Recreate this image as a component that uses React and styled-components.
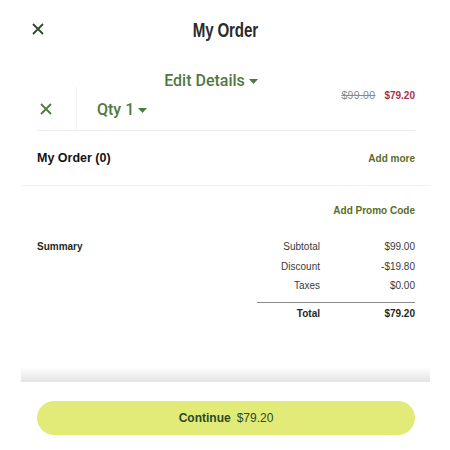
import styled, { createGlobalStyle } from "styled-components";

const GlobalStyle = createGlobalStyle`
  * { box-sizing: border-box; }
  body {
    margin: 0;
    background: #ffffff;
    font-family: "Liberation Sans", Arial, sans-serif;
  }
`;

const green = "#4f7a3f";
const olive = "#5a6d26";
const dark = "#1f2a1c";

function CloseIcon({ size = 12, color = "#2f4a2f", weight = 1.8 }) {
  return (
    <svg width={size} height={size} viewBox="0 0 12 12">
      <path d="M1 1 L11 11 M11 1 L1 11" stroke={color} strokeWidth={weight} fill="none" />
    </svg>
  );
}

function Caret() {
  return (
    <svg width="9" height="5" viewBox="0 0 9 5">
      <path d="M0 0 L9 0 L4.5 5 Z" fill={green} />
    </svg>
  );
}

export default function App() {
  const rows = [
    { label: "Subtotal", value: "$99.00" },
    { label: "Discount", value: "-$19.80" },
    { label: "Taxes", value: "$0.00" },
  ];

  return (
    <Page>
      <GlobalStyle />
      <Header>
        <HeaderClose>
          <CloseIcon />
        </HeaderClose>
        <Title>My Order</Title>
      </Header>

      <Panel>
        <ItemSection>
          <EditDetails>
            Edit Details <Caret />
          </EditDetails>
          <ItemRow>
            <RemoveCell>
              <CloseIcon color={green} />
            </RemoveCell>
            <Qty>
              Qty 1 <Caret />
            </Qty>
            <Prices>
              <OldPrice>$99.00</OldPrice>
              <NewPrice>$79.20</NewPrice>
            </Prices>
          </ItemRow>
        </ItemSection>

        <OrderRow>
          <OrderTitle>My Order (0)</OrderTitle>
          <TextLink>Add more</TextLink>
        </OrderRow>

        <PromoRow>
          <TextLink>Add Promo Code</TextLink>
        </PromoRow>

        <Summary>
          <SummaryTitle>Summary</SummaryTitle>
          <Table>
            {rows.map((r) => (
              <Line key={r.label}>
                <Cell>{r.label}</Cell>
                <Cell>{r.value}</Cell>
              </Line>
            ))}
            <Line total>
              <Cell>Total</Cell>
              <Cell>$79.20</Cell>
            </Line>
          </Table>
        </Summary>

        <Fade />
      </Panel>

      <Footer>
        <ContinueButton>
          <strong>Continue</strong>
          <span>$79.20</span>
        </ContinueButton>
      </Footer>
    </Page>
  );
}

const Page = styled.div`
  width: 450px;
  height: 450px;
  overflow: hidden;
  background: #fff;
  display: flex;
  flex-direction: column;
`;

const Header = styled.div`
  height: 60px;
  display: flex;
  align-items: center;
  justify-content: center;
  position: relative;
`;

const HeaderClose = styled.div`
  position: absolute;
  left: 32px;
  top: 23px;
  display: flex;
`;

const Title = styled.h1`
  margin: 0;
  display: inline-block;
  font-family: "Liberation Sans", Arial, sans-serif;
  font-weight: 700;
  font-size: 21px;
  letter-spacing: -0.2px;
  color: #2a2b2a;
  transform: scaleX(0.72);
`;

const Panel = styled.div`
  margin: 0 20px 0 21px;
  display: flex;
  flex-direction: column;
`;

const ItemSection = styled.div`
  margin: 0 15px 0 16px;
  padding-top: 11px;
  border-bottom: 1px solid #ececec;
`;

const EditDetails = styled.div`
  display: flex;
  align-items: center;
  justify-content: center;
  gap: 4px;
  height: 18px;
  padding-right: 30px;
  font-family: Roboto, "Liberation Sans", sans-serif;
  font-size: 16px;
  font-weight: 500;
  color: ${green};
  svg { margin-top: 2px; }
`;

const ItemRow = styled.div`
  display: flex;
  height: 43px;
  margin-top: -2px;
`;

const RemoveCell = styled.div`
  width: 40px;
  padding-left: 3px;
  display: flex;
  align-items: center;
  border-right: 1px solid #f1f1f1;
`;

const Qty = styled.div`
  margin-left: 20px;
  padding-top: 2px;
  display: flex;
  align-items: center;
  gap: 4px;
  font-family: Roboto, "Liberation Sans", sans-serif;
  font-size: 16px;
  font-weight: 500;
  color: ${green};
  svg { margin-top: 2px; }
`;

const Prices = styled.div`
  margin-left: auto;
  padding-top: 2px;
  display: flex;
  gap: 9px;
  font-size: 10px;
  height: 14px;
  align-items: center;
`;

const OldPrice = styled.span`
  color: #8a8a8a;
  font-size: 10.5px;
  letter-spacing: 0.3px;
  text-decoration: line-through;
`;

const NewPrice = styled.span`
  color: #a8324a;
  font-weight: 700;
`;

const OrderRow = styled.div`
  height: 55px;
  padding: 0 15px 0 16px;
  display: flex;
  align-items: center;
  justify-content: space-between;
  border-bottom: 1px solid #f2f2ec;
`;

const OrderTitle = styled.div`
  font-size: 12.5px;
  font-weight: 700;
  color: #141414;
`;

const TextLink = styled.span`
  font-size: 10px;
  font-weight: 700;
  color: ${olive};
`;

const PromoRow = styled.div`
  padding: 19px 15px 0 16px;
  display: flex;
  justify-content: flex-end;
  line-height: 12px;
`;

const Summary = styled.div`
  padding: 24px 15px 0 16px;
  display: flex;
  justify-content: space-between;
  align-items: flex-start;
`;

const SummaryTitle = styled.div`
  font-size: 10px;
  font-weight: 700;
  color: ${dark};
  line-height: 12px;
`;

const Table = styled.div`
  width: 158px;
  display: flex;
  flex-direction: column;
`;

const Line = styled.div`
  display: grid;
  grid-template-columns: 63px 95px;
  height: ${(p) => (p.total ? "auto" : "19.5px")};
  font-size: 10px;
  line-height: 12px;
  color: ${(p) => (p.total ? dark : "#3a3a3a")};
  font-weight: ${(p) => (p.total ? 700 : 400)};
  ${(p) => p.total && `border-top: 1.5px solid #8a8a8a; padding-top: 5px; margin-top: 2px;`}
`;

const Cell = styled.span`
  text-align: right;
`;

const Fade = styled.div`
  margin-top: 47px;
  height: 15px;
  background: linear-gradient(to bottom, #ffffff, #e4e4e4);
`;

const Footer = styled.div`
  padding: 19px 35px 0 37px;
`;

const ContinueButton = styled.button`
  width: 378px;
  height: 34px;
  border: none;
  border-radius: 17px;
  background: #e2eb78;
  display: flex;
  align-items: center;
  justify-content: center;
  gap: 6px;
  font-family: "Liberation Sans", Arial, sans-serif;
  font-size: 12px;
  color: #2b4a26;
  strong { font-weight: 700; }
`;
